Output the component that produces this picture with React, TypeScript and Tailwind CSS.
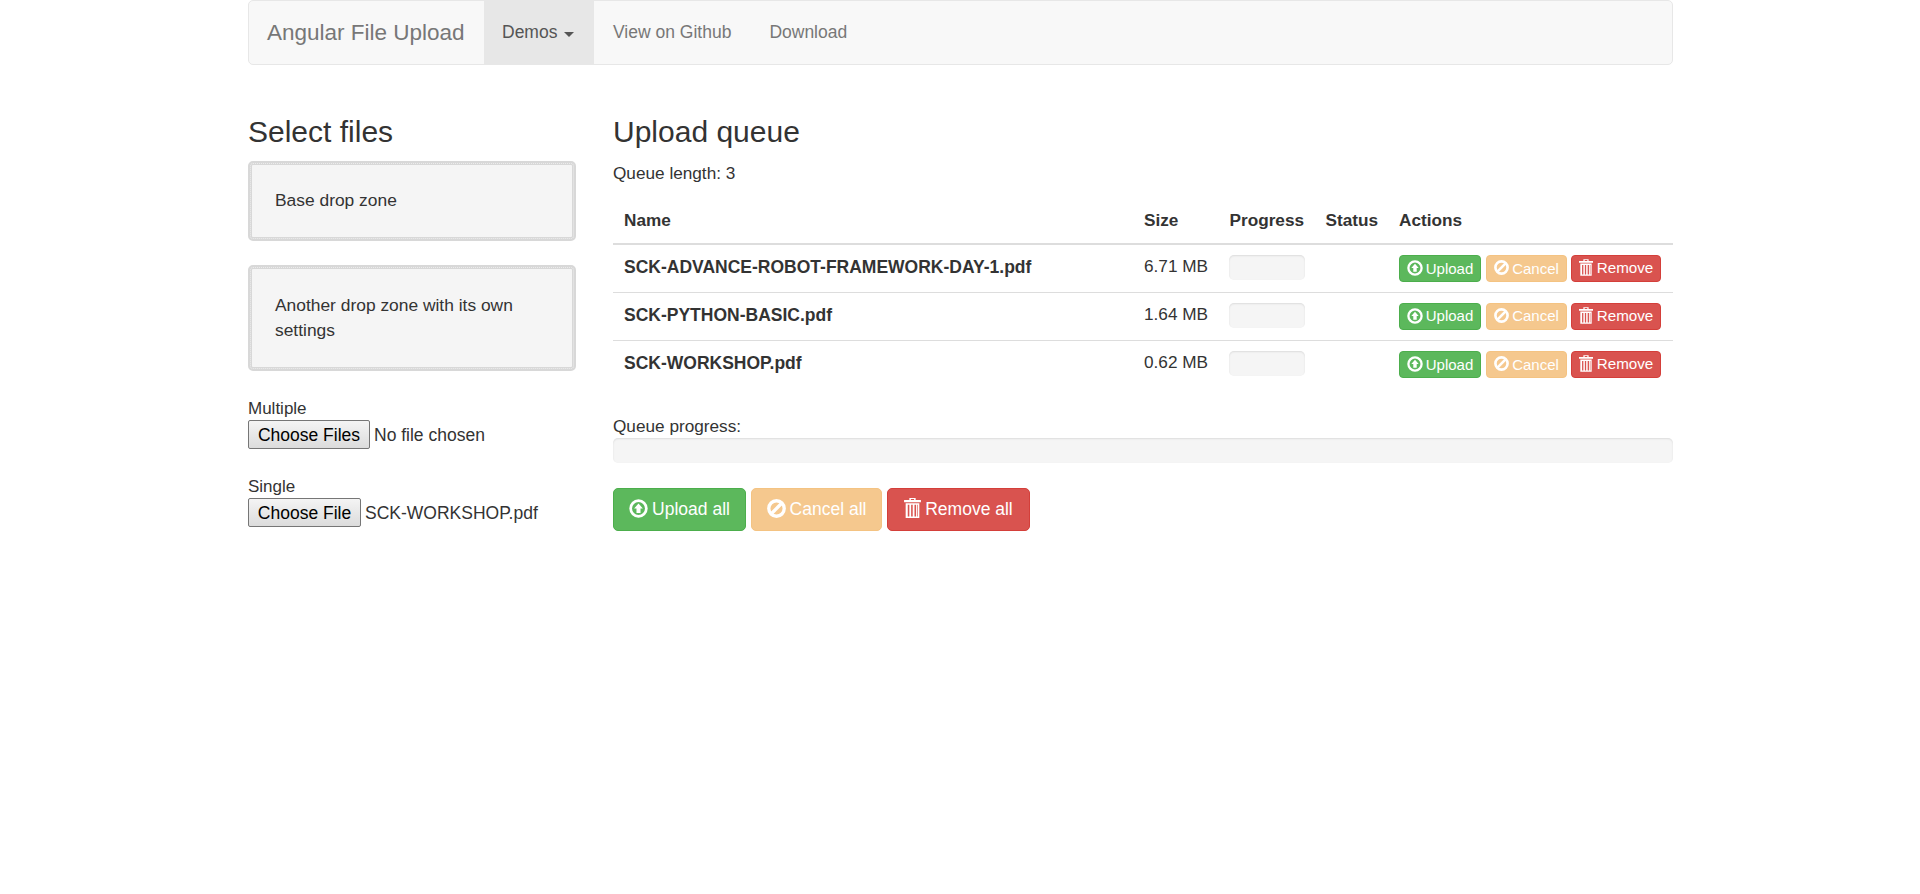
function UploadIcon({ size }: { size: number }) {
  return (
    <svg width={size} height={size} viewBox="0 0 16 16" className="-mt-[2px] shrink-0" aria-hidden="true">
      <circle cx="8" cy="8" r="6.6" fill="none" stroke="currentColor" strokeWidth="2.3" />
      <path fill="currentColor" d="M8 3.800 11.700 7.900H9.700V11.800H6.300V7.900H4.300Z" />
    </svg>
  );
}

function BanIcon({ size }: { size: number }) {
  return (
    <svg width={size} height={size} viewBox="0 0 16 16" className="-mt-[2px] shrink-0" aria-hidden="true">
      <circle cx="8" cy="8" r="6.5" fill="none" stroke="currentColor" strokeWidth="2.8" />
      <path d="M3.400 12.600 12.600 3.400" stroke="currentColor" strokeWidth="2.8" />
    </svg>
  );
}

function TrashIcon({ width, height }: { width: number; height: number }) {
  return (
    <svg width={width} height={height} viewBox="0 0 16 19" className="-mt-[3px] shrink-0" aria-hidden="true">
      <path fill="currentColor" fillRule="evenodd" d="M5 0H11V2H16V4H0V2H5ZM6.500 1V2H9.500V1Z" />
      <path fill="currentColor" fillRule="evenodd" d="M1.500 5H14.500V19H1.500ZM3.500 6.500V17.500H5V6.500ZM6.700 6.500V17.500H8.200V6.500ZM9.900 6.500V17.500H11.400V6.500ZM12.400 6.500V17.500H13V6.500Z" />
    </svg>
  );
}

function SmallButtons() {
  return (
    <div className="flex items-center text-[15px] text-white">
      <button className="flex h-[27px] w-[82px] items-center justify-center gap-[3px] rounded-[4px] border border-[#4cae4c] bg-[#5cb85c] pt-[1px]">
        <UploadIcon size={16} />
        Upload
      </button>
      <button className="ml-[5px] flex h-[27px] w-[81px] items-center justify-center gap-[3px] rounded-[4px] border border-[#f4c382] bg-[#f5c88e] pt-[1px]">
        <BanIcon size={15} />
        Cancel
      </button>
      <button className="ml-[4px] flex h-[27px] w-[90px] items-center justify-center gap-[4px] rounded-[4px] border border-[#d43f3a] bg-[#d9534f] pt-[1px] text-[15.2px]">
        <TrashIcon width={14} height={17} />
        Remove
      </button>
    </div>
  );
}

const files = [
  { name: "SCK-ADVANCE-ROBOT-FRAMEWORK-DAY-1.pdf", size: "6.71 MB" },
  { name: "SCK-PYTHON-BASIC.pdf", size: "1.64 MB" },
  { name: "SCK-WORKSHOP.pdf", size: "0.62 MB" },
];

function FileField({ label, button, width, value }: { label: string; button: string; width: string; value: string }) {
  return (
    <div className="text-[17px] leading-[24px]">
      <div className="h-[23px]">{label}</div>
      <div className="flex items-center">
        <span className={`${width} flex h-[29px] items-center justify-center rounded-[2px] border border-[#767676] bg-gradient-to-b from-[#f4f4f4] to-[#dcdcdc] text-[17.5px] text-black`}>
          {button}
        </span>
        <span className="ml-[4px] text-[17.5px]">{value}</span>
      </div>
    </div>
  );
}

const dropZone =
  "flex items-center rounded-[5px] border-[4px] border-[#d8d8d8] bg-[#f5f5f5] px-[23px] text-[17.4px] leading-[25px] outline-1 outline-dotted outline-[#ececec] -outline-offset-[3px]";

export default function App() {
  return (
    <div className="min-h-screen bg-white font-['Liberation_Sans',Arial,sans-serif] text-[17.2px] text-[#333]">
      <div className="ml-[248px] w-[1425px]">
        <nav className="flex h-[65px] items-stretch rounded-[5px] border border-[#e7e7e7] bg-[#f8f8f8] text-[17.5px] text-[#777]">
          <a className="ml-[18px] flex w-[217px] items-center text-[22.5px]">Angular File Upload</a>
          <a className="flex w-[110px] items-center bg-[#e7e7e7] pl-[18px] text-[#555]">
            Demos
            <span className="ml-[7px] mt-[3px] h-0 w-0 border-x-[5px] border-t-[5px] border-x-transparent border-t-[#555]" />
          </a>
          <a className="ml-[19px] flex items-center">View on Github</a>
          <a className="ml-[38px] flex items-center">Download</a>
        </nav>

        <div className="mt-[48px] flex gap-[37px]">
          <div className="w-[328px] shrink-0">
            <h3 className="mt-[3px] text-[30px] leading-[32px]">Select files</h3>
            <div className={`${dropZone} mt-[13px] h-[80px] pb-[2px]`}>Base drop zone</div>
            <div className={`${dropZone} mt-[24px] h-[106px]`}>Another drop zone with its own settings</div>
            <div className="mt-[26px]">
              <FileField label="Multiple" button="Choose Files" width="w-[122px]" value="No file chosen" />
            </div>
            <div className="mt-[26px]">
              <FileField label="Single" button="Choose File" width="w-[113px]" value="SCK-WORKSHOP.pdf" />
            </div>
          </div>

          <div className="min-w-0 flex-1">
            <h3 className="mt-[3px] text-[30px] leading-[32px]">Upload queue</h3>
            <p className="mt-[13px] leading-[24px]">Queue length: 3</p>
            <table className="mt-[13px] w-full table-fixed border-collapse">
              <colgroup>
                <col className="w-[521px]" />
                <col className="w-[85px]" />
                <col className="w-[96px]" />
                <col className="w-[74px]" />
                <col />
              </colgroup>
              <thead>
                <tr className="border-b-[2.4px] border-[#ddd] text-left">
                  <th className="h-[46px] pl-[11px] pr-[10px] font-bold">Name</th>
                  <th className="px-[10px] font-bold">Size</th>
                  <th className="pl-[10.500px] font-bold">Progress</th>
                  <th className="pl-[10.500px] font-bold">Status</th>
                  <th className="px-[10px] font-bold">Actions</th>
                </tr>
              </thead>
              <tbody>
                {files.map((file, i) => (
                  <tr key={file.name} className={i > 0 ? "border-t border-[#ddd]" : ""}>
                    <td className="h-[48px] whitespace-nowrap pl-[11px] pr-[10px] pb-[2px] text-[17.5px] font-bold">{file.name}</td>
                    <td className="whitespace-nowrap px-[10px] pb-[2px]">{file.size}</td>
                    <td className="px-[10px] pb-[2px]">
                      <div className="h-[25px] w-[76px] rounded-[5px] bg-[#f5f5f5] shadow-[inset_0_1px_2px_rgba(0,0,0,0.1)]" />
                    </td>
                    <td />
                    <td className="px-[10px]">
                      <SmallButtons />
                    </td>
                  </tr>
                ))}
              </tbody>
            </table>

            <div className="mt-[25.500px] leading-[24px]">Queue progress:</div>
            <div className="h-[25px] rounded-[5px] bg-[#f5f5f5] shadow-[inset_0_1px_2px_rgba(0,0,0,0.1)]" />

            <div className="mt-[25px] flex text-[17.5px] text-white">
              <button className="flex h-[43px] w-[133px] items-center justify-center gap-[4px] rounded-[5px] border border-[#4cae4c] bg-[#5cb85c]">
                <UploadIcon size={19} />
                Upload all
              </button>
              <button className="ml-[5px] flex h-[43px] w-[131px] items-center justify-center gap-[4px] rounded-[5px] border border-[#f4c382] bg-[#f5c88e]">
                <BanIcon size={19} />
                Cancel all
              </button>
              <button className="ml-[5px] flex h-[43px] w-[143px] items-center justify-center gap-[4px] rounded-[5px] border border-[#d43f3a] bg-[#d9534f]">
                <TrashIcon width={17} height={20} />
                Remove all
              </button>
            </div>
          </div>
        </div>
      </div>
    </div>
  );
}
